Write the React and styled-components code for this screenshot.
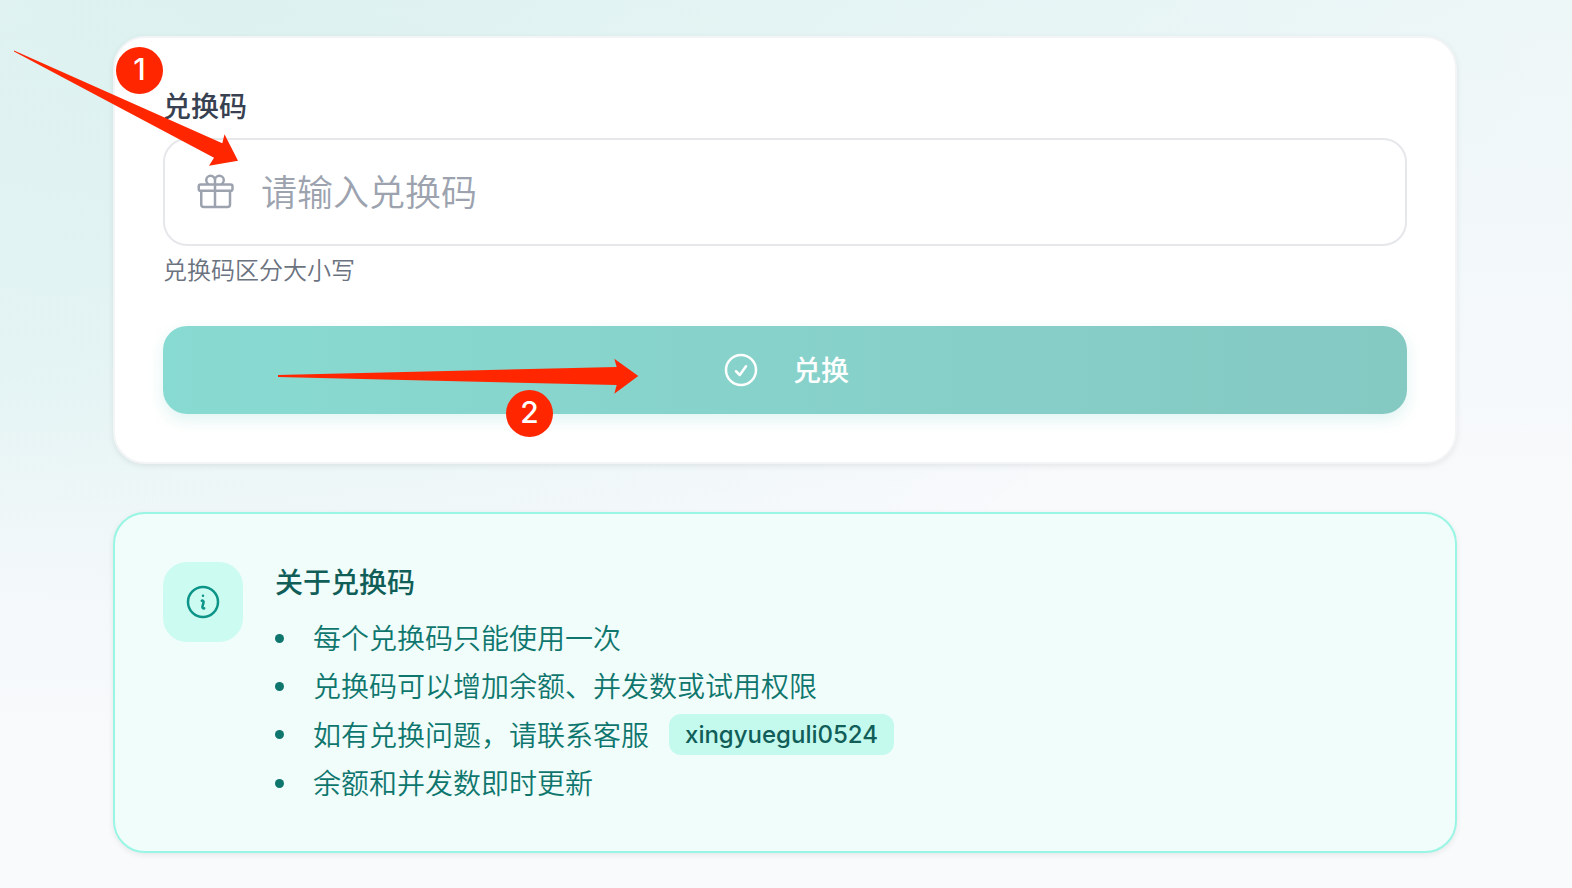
import React, { useState } from 'react'
import styled, { createGlobalStyle } from 'styled-components'

const GlobalStyle = createGlobalStyle`
  *, *::before, *::after {
    box-sizing: border-box;
  }

  body {
    margin: 0;
    font-family: 'Open Sans', 'Noto Sans CJK SC', sans-serif;
    font-size: 28px;
    line-height: 40px;
    background-color: #f9fafc;
  }
`

const Page = styled.div`
  position: relative;
  min-height: 100vh;
  padding: 36px 115px 36px 113px;
  background-image:
    radial-gradient(ellipse 85% 70% at 15% 0%, rgba(20, 184, 150, .08) 0%, rgba(20, 184, 150, 0) 100%),
    radial-gradient(ellipse 70% 45% at 0% 42%, rgba(20, 184, 166, .05) 0%, rgba(20, 184, 166, 0) 100%),
    linear-gradient(180deg, rgba(20, 184, 166, .05) 0%, rgba(20, 184, 166, 0) 60%);
`

const Main = styled.main`
  display: flex;
  flex-direction: column;
  gap: 48px;
`

const Card = styled.section`
  padding: 48px;
  border: 2px solid ${props => props.$tinted ? '#99f6e4' : '#f3f4f6'};
  border-radius: 32px;
  background: ${props => props.$tinted ? '#f0fdfa' : '#fff'};
  box-shadow: 0 2px 6px rgba(0, 0, 0, .08);
`

const Form = styled.form`
  display: flex;
  flex-direction: column;
`

const Label = styled.label`
  margin-bottom: 12px;
  color: #374151;
  font-weight: 500;
`

const Field = styled.div`
  position: relative;
`

const FieldIcon = styled.span`
  position: absolute;
  top: 0;
  bottom: 0;
  left: 32px;
  display: flex;
  align-items: center;
  color: #9ca3af;
  pointer-events: none;
`

const Input = styled.input`
  display: block;
  width: 100%;
  padding: 24px 32px 24px 96px;
  border: 2px solid #e5e7eb;
  border-radius: 24px;
  background: #fff;
  color: #111827;
  font-family: inherit;
  font-size: 36px;
  font-weight: 350;
  line-height: 56px;
  height: 108px;
  outline: none;

  &::placeholder {
    color: #9ca3af;
    opacity: 1;
  }
`

const Hint = styled.p`
  margin: 8px 0 40px;
  color: #6b7280;
  font-size: 24px;
  font-weight: 350;
  line-height: 32px;
`

const SubmitBtn = styled.button`
  display: flex;
  align-items: center;
  justify-content: center;
  gap: 32px;
  width: 100%;
  padding: 24px;
  border: 0;
  border-radius: 24px;
  background: linear-gradient(to right, #14b8a6, #0d9488);
  box-shadow: 0 6px 14px rgba(20, 184, 166, .25);
  color: #fff;
  font-family: inherit;
  font-size: 28px;
  font-weight: 500;
  line-height: 40px;
  cursor: pointer;

  &:disabled {
    opacity: .5;
    cursor: not-allowed;
  }
`

const InfoRow = styled.div`
  display: flex;
  align-items: flex-start;
  gap: 32px;
`

const InfoIcon = styled.div`
  display: flex;
  flex-shrink: 0;
  align-items: center;
  justify-content: center;
  width: 80px;
  height: 80px;
  border-radius: 24px;
  background: #ccfbf1;
  color: #0d9488;
`

const InfoTitle = styled.h3`
  margin: 0;
  color: #115e59;
  font-size: 28px;
  font-weight: 500;
`

const List = styled.ul`
  display: flex;
  flex-direction: column;
  gap: 8px;
  margin: 16px 0 0;
  padding: 0;
  list-style: none;
  color: #0f766e;
  font-weight: 350;
`

const Item = styled.li`
  display: flex;
  align-items: center;

  &::before {
    content: '';
    width: 9px;
    height: 9px;
    margin-right: 29px;
    border-radius: 50%;
    background: currentColor;
  }
`

const Contact = styled.span`
  margin-left: 20px;
  padding: 1px 16px 0;
  border-radius: 12px;
  background: #c4f9ee;
  color: #115e59;
  font-family: Inter, sans-serif;
  font-size: 24px;
  font-weight: 500;
`

const Marks = styled.svg`
  position: absolute;
  top: 0;
  left: 0;
  width: 660px;
  height: 450px;
  fill: #ff2600;
  pointer-events: none;
`

const Badge = styled.span`
  position: absolute;
  top: ${props => props.$top}px;
  left: ${props => props.$left}px;
  width: 47px;
  height: 47px;
  border-radius: 50%;
  background: #ff2600;
  color: #fff;
  font-family: Inter, sans-serif;
  font-size: 30px;
  font-weight: 500;
  line-height: 44px;
  text-align: center;
`

const Icon = ({ d }) => (
  <svg width="40" height="40" viewBox="0 0 24 24" fill="none" stroke="currentColor" strokeWidth="1.5" strokeLinecap="round" strokeLinejoin="round" aria-hidden="true">
    <path d={d} />
  </svg>
)

const icons = {
  gift: 'M21 11.25v8.25a1.5 1.5 0 01-1.5 1.5H5.25a1.5 1.5 0 01-1.5-1.5v-8.25M12 4.875A2.625 2.625 0 109.375 7.5H12m0-2.625V7.5m0-2.625A2.625 2.625 0 1114.625 7.5H12m0 0V21m-8.625-9.75h18c.621 0 1.125-.504 1.125-1.125v-1.5c0-.621-.504-1.125-1.125-1.125h-18c-.621 0-1.125.504-1.125 1.125v1.5c0 .621.504 1.125 1.125 1.125z',
  check: 'M9 12.75L11.25 15 15 9.75M21 12a9 9 0 11-18 0 9 9 0 0118 0z',
  info: 'M11.25 11.25l.041-.02a.75.75 0 011.063.852l-.708 2.836a.75.75 0 001.063.853l.041-.021M21 12a9 9 0 11-18 0 9 9 0 0118 0zm-9-3.75h.008v.008H12V8.25z'
}

const App = () => {
  const [code, setCode] = useState('')

  return (
    <Page>
      <GlobalStyle />
      <Main>
        <Card>
          <Form onSubmit={e => e.preventDefault()}>
            <Label htmlFor="code">兑换码</Label>
            <Field>
              <FieldIcon><Icon d={icons.gift} /></FieldIcon>
              <Input
                id="code"
                type="text"
                placeholder="请输入兑换码"
                value={code}
                onChange={e => setCode(e.target.value)}
              />
            </Field>
            <Hint>兑换码区分大小写</Hint>
            <SubmitBtn type="submit" disabled={!code}>
              <Icon d={icons.check} />
              兑换
            </SubmitBtn>
          </Form>
        </Card>

        <Card $tinted>
          <InfoRow>
            <InfoIcon><Icon d={icons.info} /></InfoIcon>
            <div>
              <InfoTitle>关于兑换码</InfoTitle>
              <List>
                <Item>每个兑换码只能使用一次</Item>
                <Item>兑换码可以增加余额、并发数或试用权限</Item>
                <Item>如有兑换问题，请联系客服<Contact>xingyueguli0524</Contact></Item>
                <Item>余额和并发数即时更新</Item>
              </List>
            </div>
          </InfoRow>
        </Card>
      </Main>

      <Marks viewBox="0 0 660 450" aria-hidden="true">
        <path d="M14 50.5L222.3 143.3L224.5 134.3L238 160.7L209 165.7L214 157.7L14 51.5Z" />
        <path d="M278 375L616.7 367L614.3 358.7L638.3 376L614.3 393.7L616.7 385L278 377Z" />
      </Marks>
      <Badge $top={47} $left={116}>1</Badge>
      <Badge $top={390} $left={506}>2</Badge>
    </Page>
  )
}

export default App
